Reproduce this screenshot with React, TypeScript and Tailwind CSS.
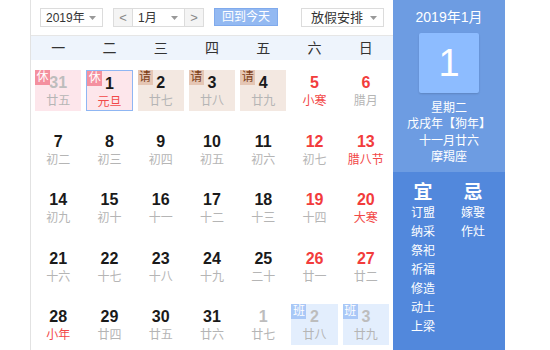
import React from 'react'

type Day = {
  n: number
  lunar: string
  numColor?: 'black' | 'red' | 'grey'
  lunarRed?: boolean
  tag?: '休' | '请' | '班'
  selected?: boolean
}

const days: Day[] = [
  { n: 31, lunar: '廿五', numColor: 'grey', tag: '休' },
  { n: 1, lunar: '元旦', lunarRed: true, tag: '休', selected: true },
  { n: 2, lunar: '廿七', tag: '请' },
  { n: 3, lunar: '廿八', tag: '请' },
  { n: 4, lunar: '廿九', tag: '请' },
  { n: 5, lunar: '小寒', numColor: 'red', lunarRed: true },
  { n: 6, lunar: '腊月', numColor: 'red' },
  { n: 7, lunar: '初二' },
  { n: 8, lunar: '初三' },
  { n: 9, lunar: '初四' },
  { n: 10, lunar: '初五' },
  { n: 11, lunar: '初六' },
  { n: 12, lunar: '初七', numColor: 'red' },
  { n: 13, lunar: '腊八节', numColor: 'red', lunarRed: true },
  { n: 14, lunar: '初九' },
  { n: 15, lunar: '初十' },
  { n: 16, lunar: '十一' },
  { n: 17, lunar: '十二' },
  { n: 18, lunar: '十三' },
  { n: 19, lunar: '十四', numColor: 'red' },
  { n: 20, lunar: '大寒', numColor: 'red', lunarRed: true },
  { n: 21, lunar: '十六' },
  { n: 22, lunar: '十七' },
  { n: 23, lunar: '十八' },
  { n: 24, lunar: '十九' },
  { n: 25, lunar: '二十' },
  { n: 26, lunar: '廿一', numColor: 'red' },
  { n: 27, lunar: '廿二', numColor: 'red' },
  { n: 28, lunar: '小年', lunarRed: true },
  { n: 29, lunar: '廿四' },
  { n: 30, lunar: '廿五' },
  { n: 31, lunar: '廿六' },
  { n: 1, lunar: '廿七', numColor: 'grey' },
  { n: 2, lunar: '廿八', numColor: 'grey', tag: '班' },
  { n: 3, lunar: '廿九', numColor: 'grey', tag: '班' },
]

const weekdays = ['一', '二', '三', '四', '五', '六', '日']
const yi = ['订盟', '纳采', '祭祀', '祈福', '修造', '动土', '上梁']
const ji = ['嫁娶', '作灶']

function Caret() {
  return (
    <svg width="7" height="4" viewBox="0 0 7 4" className="shrink-0">
      <path d="M0 0h7L3.5 4z" fill="#999" />
    </svg>
  )
}

function DayCell({ d }: { d: Day }) {
  const bg =
    d.tag === '休'
      ? 'bg-[#fde6eb]'
      : d.tag === '请'
        ? 'bg-[#f3e8e1]'
        : d.tag === '班'
          ? 'bg-[#e3eefd]'
          : ''
  const num =
    d.numColor === 'red'
      ? 'text-[#f23c3c]'
      : d.numColor === 'grey'
        ? 'text-[#bdbdbd]'
        : 'text-[#1a1a1a]'
  return (
    <div
      className={`relative h-[41px] ${bg} ${d.selected ? 'border border-[#8fb6f3]' : ''} flex flex-col items-center pt-[4px]`}
    >
      {d.tag === '休' && (
        <span className="absolute left-0 top-0 w-[15px] h-[15px] bg-[#f4909f] text-white text-[12px] leading-[15px] text-center">
          休
        </span>
      )}
      {d.tag === '请' && (
        <span className="absolute left-0 top-0 w-[15px] h-[15px] bg-[#e5c6b4] text-[#7a3c16] text-[12px] leading-[15px] text-center">
          请
        </span>
      )}
      {d.tag === '班' && (
        <span className="absolute left-0 top-0 w-[15px] h-[15px] bg-[#a9c8f7] text-white text-[12px] leading-[15px] text-center">
          班
        </span>
      )}
      <span className={`text-[16px] leading-[18px] font-bold ${num}`}>{d.n}</span>
      <span
        className={`mt-[1px] text-[12px] leading-[16px] ${d.lunarRed ? 'text-[#f24848]' : 'text-[#b5b5b5]'}`}
      >
        {d.lunar}
      </span>
    </div>
  )
}

export default function App() {
  return (
    <div
      className="w-[550px] h-[350px] bg-white flex overflow-hidden"
      style={{ fontFamily: '"Liberation Sans", "Noto Sans CJK SC", sans-serif' }}
    >
      <div className="w-[30px] shrink-0" />

      {/* calendar */}
      <div className="w-[363px] shrink-0 border-l border-[#e2e2e2] flex flex-col">
        <div className="h-[36px] border-b border-[#e6e6e6] flex items-start pt-[8px] text-[12px] text-[#333]">
          <div className="ml-[9px] w-[63px] h-[19px] border border-[#dcdcdc] flex items-center justify-between pl-[5px] pr-[6px]">
            <span>2019年</span>
            <Caret />
          </div>
          <div className="ml-[10px] h-[19px] border border-[#dcdcdc] flex">
            <div className="w-[19px] bg-[#f4f4f4] border-r border-[#dcdcdc] flex items-center justify-center text-[#888] text-[13px]">
              &lt;
            </div>
            <div className="w-[51px] flex items-center justify-between pl-[5px] pr-[6px]">
              <span>1月</span>
              <Caret />
            </div>
            <div className="w-[19px] bg-[#f4f4f4] border-l border-[#dcdcdc] flex items-center justify-center text-[#888] text-[13px]">
              &gt;
            </div>
          </div>
          <div className="ml-[10px] w-[64px] h-[18px] bg-[#93b9f2] border border-[#80aaec] text-white flex items-center justify-center">
            回到今天
          </div>
          <div className="ml-[23px] w-[83px] h-[19px] border border-[#dcdcdc] flex items-center justify-between pl-[9px] pr-[6px] text-[13px]">
            <span>放假安排</span>
            <Caret />
          </div>
        </div>

        <div className="h-[24px] bg-[#eef4fc] grid grid-cols-7 px-[4px] gap-x-[5px] items-center text-[14px] text-[#333]">
          {weekdays.map((w) => (
            <div key={w} className="text-center">
              {w}
            </div>
          ))}
        </div>

        <div className="grid grid-cols-7 px-[4px] gap-x-[5px] gap-y-[17.5px] pt-[10px]">
          {days.map((d, i) => (
            <DayCell key={i} d={d} />
          ))}
        </div>
      </div>

      {/* side panel */}
      <div className="w-[112px] shrink-0 flex flex-col text-white">
        <div className="h-[172px] bg-[#6d9ce2] flex flex-col items-center">
          <div className="mt-[8px] text-[14px] leading-[18px]">2019年1月</div>
          <div className="mt-[7px] w-[60px] h-[60px] rounded-[2px] bg-[#8dbcff] shadow-[0_1px_2px_rgba(0,0,0,0.15)] flex items-center justify-center text-[38px] leading-none">
            1
          </div>
          <div className="mt-[7px] text-[12px] leading-[16.3px] text-center">
            <div>星期二</div>
            <div>戊戌年【狗年】</div>
            <div>十一月廿六</div>
            <div>摩羯座</div>
          </div>
        </div>
        <div className="flex-1 bg-[#5288dc] flex pl-[5px] pt-[10px]">
          <div className="w-[50px] flex flex-col items-center">
            <div className="text-[19px] leading-[22px] font-bold">宜</div>
            {yi.map((t) => (
              <div key={t} className="text-[12px] leading-[19px]">
                {t}
              </div>
            ))}
          </div>
          <div className="w-[50px] flex flex-col items-center">
            <div className="text-[19px] leading-[22px] font-bold">忌</div>
            {ji.map((t) => (
              <div key={t} className="text-[12px] leading-[19px]">
                {t}
              </div>
            ))}
          </div>
        </div>
      </div>
      <div className="flex-1" />
    </div>
  )
}
